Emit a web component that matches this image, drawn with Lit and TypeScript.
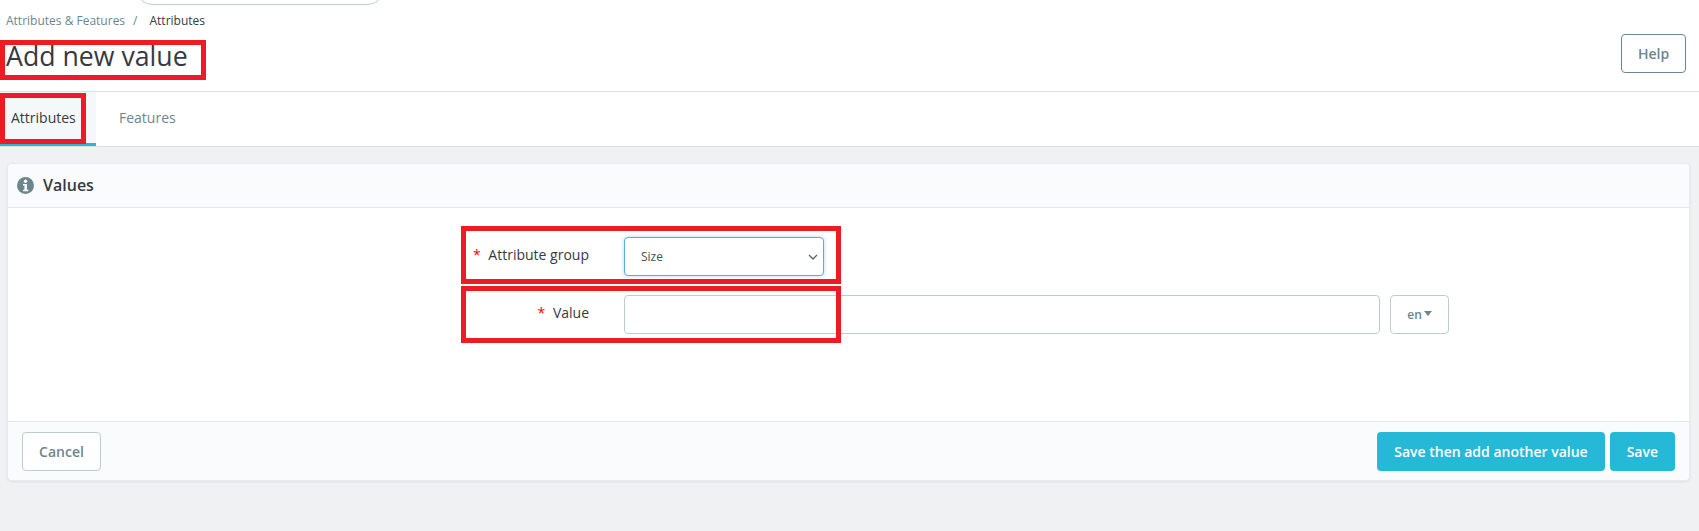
import { LitElement, html, css } from 'lit';
import { customElement, state } from 'lit/decorators.js';

@customElement('app-root')
export class AppRoot extends LitElement {
  static styles = css`
    :host {
      display: block;
      position: relative;
      height: 531px;
      overflow: hidden;
      background: #eff1f2;
      font-family: 'Open Sans', sans-serif;
      color: #363a41;
    }

    * {
      box-sizing: border-box;
    }

    .top {
      background: #fff;
      border-bottom: 1px solid #dfdfdf;
      height: 92px;
      display: flex;
      flex-direction: column;
    }

    .search-wrap {
      height: 5px;
      overflow: hidden;
      padding-left: 137px;
    }

    .search {
      width: 246px;
      height: 30px;
      margin-top: -25px;
      border: 1px solid #bbcdd2;
      border-radius: 15px;
      background: #fff;
    }

    .crumbs {
      display: flex;
      align-items: center;
      height: 20px;
      margin-top: 5px;
      padding-left: 6px;
      font-size: 12px;
      color: #6c868e;
    }

    .crumbs .sep {
      margin: 0 12px 0 8px;
    }

    .crumbs .current {
      color: #363a41;
    }

    .title-row {
      display: flex;
      justify-content: space-between;
      align-items: flex-start;
      padding: 7px 13px 0 6px;
    }

    h1 {
      margin: 0;
      font-size: 26.7px;
      line-height: 38px;
      font-weight: 400;
      color: #363a41;
    }

    .help {
      margin-top: -3px;
      width: 65px;
      height: 39px;
      border: 1px solid #6c868e;
      border-radius: 4px;
      background: #fff;
      color: #6c868e;
      font: 600 14px 'Open Sans', sans-serif;
    }

    .tabs {
      display: flex;
      background: #fff;
      height: 55px;
      border-bottom: 1px solid #dfdfdf;
    }

    .tab {
      display: flex;
      align-items: center;
      padding: 0 11px 3px;
      font-size: 14px;
      color: #6c868e;
    }

    .tab.active {
      width: 96px;
      padding-bottom: 0;
      color: #363a41;
      background: #f4f8fb;
      border-bottom: 3px solid #25b9d7;
    }

    .tab.second {
      padding-left: 23px;
    }

    .card {
      margin: 16px 9px 0 7px;
      height: 318px;
      background: #fff;
      border: 1px solid #e6ecee;
      border-radius: 5px;
      box-shadow: 0 1px 3px rgba(0, 0, 0, 0.08);
      display: flex;
      flex-direction: column;
    }

    .card-head {
      height: 44px;
      display: flex;
      align-items: center;
      gap: 9px;
      padding: 0 0 1px 9px;
      background: #fafbfc;
      border-bottom: 1px solid #e3e9eb;
      border-radius: 4px 4px 0 0;
      font-size: 16px;
      font-weight: 600;
    }

    .card-head svg {
      width: 17px;
      height: 17px;
    }

    .card-body {
      flex: 1;
      padding-top: 29px;
    }

    .row {
      display: grid;
      grid-template-columns: 616px 756px 10px 59px;
      align-items: center;
      height: 39px;
      margin-bottom: 19px;
      font-size: 14px;
    }

    .row label {
      text-align: right;
      padding: 0 35px 4px 0;
    }

    .req {
      color: #f00;
      margin-right: 4px;
    }

    .select {
      grid-column: 2;
      width: 200px;
      height: 39px;
      display: flex;
      align-items: center;
      justify-content: space-between;
      padding: 0 5px 0 16px;
      border: 1px solid #5fa8e8;
      border-radius: 4px;
      box-shadow: 0 0 4px rgba(95, 168, 232, 0.45);
      font-size: 12px;
      color: #495057;
      background: #fff;
    }

    .select svg {
      width: 10px;
      height: 6px;
    }

    .input {
      grid-column: 2;
      height: 39px;
      border: 1px solid #bbcdd2;
      border-radius: 4px;
      background: #fff;
    }

    .lang {
      grid-column: 4;
      height: 39px;
      display: flex;
      align-items: center;
      justify-content: center;
      gap: 2px;
      border: 1px solid #bbcdd2;
      border-radius: 4px;
      background: #fff;
      color: #6c868e;
      font: 600 12px 'Open Sans', sans-serif;
    }

    .caret {
      width: 0;
      height: 0;
      margin-bottom: 2px;
      border-left: 4.5px solid transparent;
      border-right: 4.5px solid transparent;
      border-top: 5px solid #6c868e;
    }

    .card-foot {
      height: 59px;
      display: flex;
      align-items: center;
      justify-content: space-between;
      padding: 1px 14px 0;
      background: #fafbfc;
      border-top: 1px solid #e3e9eb;
      border-radius: 0 0 4px 4px;
    }

    .actions {
      display: flex;
      gap: 5px;
    }

    .btn {
      height: 39px;
      border-radius: 4px;
      font: 600 14px 'Open Sans', sans-serif;
      padding: 0 17px;
    }

    .btn.cancel {
      width: 79px;
      padding: 0;
      background: #fff;
      color: #6c868e;
      border: 1px solid #bbcdd2;
    }

    .btn.primary {
      border: 0;
      background: #25b9d7;
      color: #fff;
    }

    .mark {
      position: absolute;
      border: 5px solid #ed1c24;
      pointer-events: none;
    }
  `;

  // red annotation boxes drawn over the page
  @state()
  marks = [
    { x: 0, y: 40, w: 206, h: 40 },
    { x: 0, y: 93, w: 86, h: 51 },
    { x: 461, y: 226, w: 380, h: 58 },
    { x: 461, y: 286, w: 380, h: 57 },
  ];

  render() {
    return html`
      <div class="top">
        <div class="search-wrap"><div class="search"></div></div>
        <div class="crumbs">
          <span>Attributes &amp; Features</span>
          <span class="sep">/</span>
          <span class="current">Attributes</span>
        </div>
        <div class="title-row">
          <h1>Add new value</h1>
          <button class="help">Help</button>
        </div>
      </div>

      <div class="tabs">
        <div class="tab active">Attributes</div>
        <div class="tab second">Features</div>
      </div>

      <div class="card">
        <div class="card-head">
          <svg viewBox="0 0 24 24">
            <circle cx="12" cy="12" r="12" fill="#6c868e"></circle>
            <circle cx="12" cy="6" r="2.4" fill="#fff"></circle>
            <path d="M8.5 10h5.5v8h2v2H8.5v-2h2v-6h-2z" fill="#fff"></path>
          </svg>
          <span>Values</span>
        </div>
        <div class="card-body">
          <div class="row">
            <label><span class="req">*</span> Attribute group</label>
            <div class="select">
              <span>Size</span>
              <svg viewBox="0 0 10 6">
                <path d="M1 1l4 4 4-4" fill="none" stroke="#5a6268" stroke-width="1.3"></path>
              </svg>
            </div>
          </div>
          <div class="row">
            <label><span class="req">*</span> Value</label>
            <div class="input"></div>
            <div class="lang"><span>en</span><span class="caret"></span></div>
          </div>
        </div>
        <div class="card-foot">
          <button class="btn cancel">Cancel</button>
          <div class="actions">
            <button class="btn primary">Save then add another value</button>
            <button class="btn primary">Save</button>
          </div>
        </div>
      </div>

      ${this.marks.map(
        (m) => html`<div
          class="mark"
          style="left:${m.x}px;top:${m.y}px;width:${m.w}px;height:${m.h}px"
        ></div>`
      )}
    `;
  }
}
